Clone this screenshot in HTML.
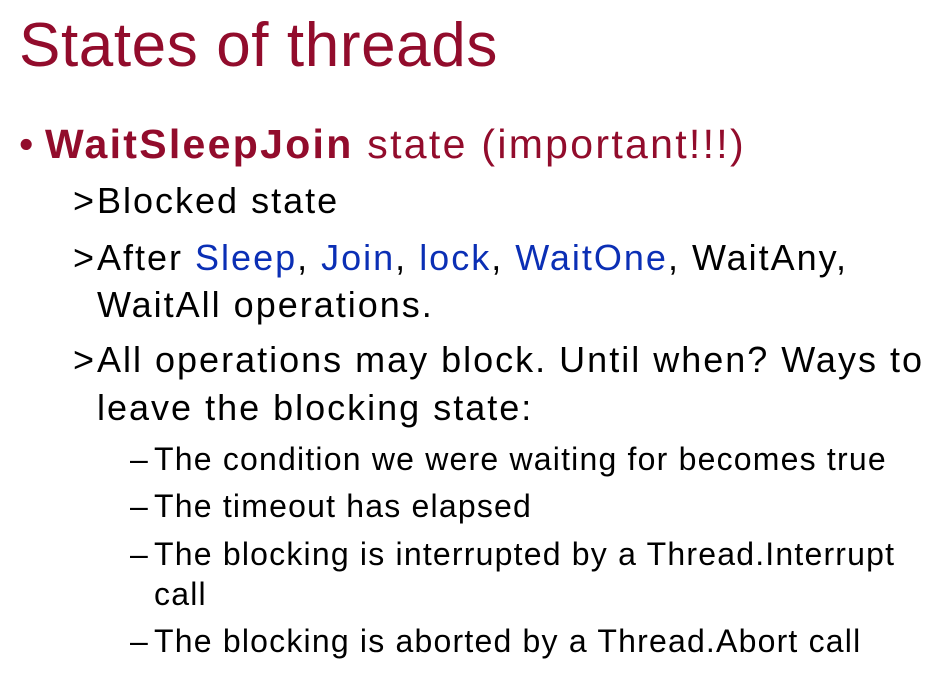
<!DOCTYPE html>
<html><head><meta charset="utf-8"><style>
html,body{margin:0;padding:0;background:#fff;width:940px;height:687px;overflow:hidden}
body{font-family:"Liberation Sans",Arial,sans-serif;position:relative}
div{position:absolute;line-height:1;white-space:nowrap}
.r{color:#920c2c}.b{color:#0b2fb5}
.t{font-size:62px;color:#920c2c;left:19px;top:15px;letter-spacing:0.6px}
.l1{font-size:41px;color:#920c2c;letter-spacing:2.3px}
.l2{font-size:36px;color:#000;letter-spacing:2px}
.l3{font-size:32px;color:#000;letter-spacing:1.2px}
.m{letter-spacing:0}
</style></head><body>
<div class="t">States of threads</div>
<div class="l1 m" style="left:19px;top:124px">•</div>
<div class="l1" style="left:45px;top:124px"><b>WaitSleepJoin</b> state (important!!!)</div>
<div class="l2 r m" style="left:73px;top:183px">&gt;</div>
<div class="l2" style="left:97px;top:183px">Blocked state</div>
<div class="l2 r m" style="left:73px;top:240px">&gt;</div>
<div class="l2" style="left:97px;top:240px">After <span class="b">Sleep</span>, <span class="b">Join</span>, <span class="b">lock</span>, <span class="b">WaitOne</span>, WaitAny,</div>
<div class="l2" style="left:97px;top:287px">WaitAll operations.</div>
<div class="l2 r m" style="left:73px;top:342px">&gt;</div>
<div class="l2" style="left:97px;top:342px">All operations may block. Until when? Ways to</div>
<div class="l2" style="left:97px;top:390px">leave the blocking state:</div>
<div class="l3 r m" style="left:130px;top:443px">–</div>
<div class="l3" style="left:154px;top:443px">The condition we were waiting for becomes true</div>
<div class="l3 r m" style="left:130px;top:490px">–</div>
<div class="l3" style="left:154px;top:490px">The timeout has elapsed</div>
<div class="l3 r m" style="left:130px;top:538px">–</div>
<div class="l3" style="left:154px;top:538px">The blocking is interrupted by a Thread.Interrupt</div>
<div class="l3" style="left:154px;top:578px">call</div>
<div class="l3 r m" style="left:130px;top:625px">–</div>
<div class="l3" style="left:154px;top:625px">The blocking is aborted by a Thread.Abort call</div>
</body></html>
